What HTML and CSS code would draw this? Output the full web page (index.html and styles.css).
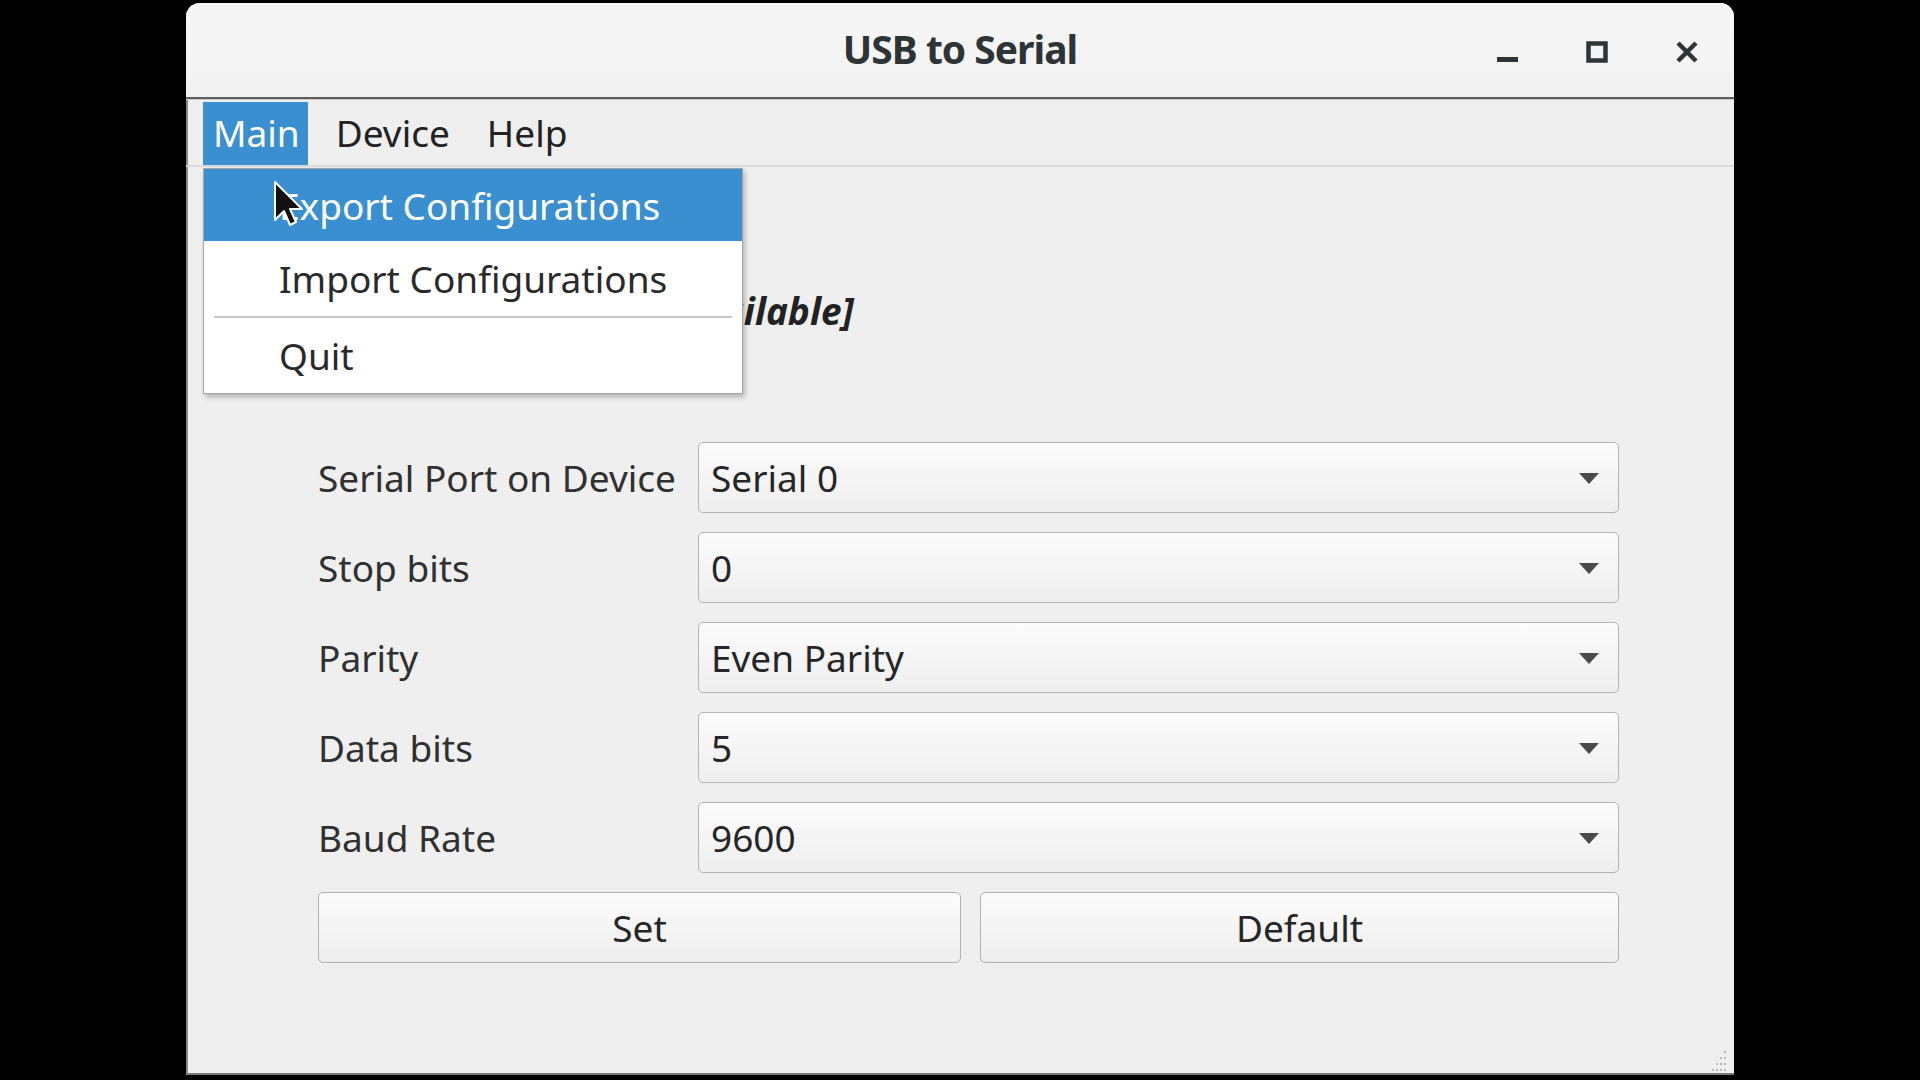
FILE: index.html
```html
<!DOCTYPE html>
<html>
<head>
<meta charset="utf-8">
<title>USB to Serial</title>
<link rel="stylesheet" href="styles.css">
</head>
<body>
<div class="desktop">
  <div class="window">
    <div class="titlebar">
      <div class="title">USB to Serial</div>
      <div class="wm-buttons">
        <svg class="wm-btn" width="24" height="24" viewBox="0 0 24 24"><rect x="2" y="16" width="21" height="5" fill="#2e3436"/></svg>
        <svg class="wm-btn" width="24" height="24" viewBox="0 0 24 24"><rect x="3.5" y="2.5" width="17" height="17" fill="none" stroke="#2e3436" stroke-width="4.5"/></svg>
        <svg class="wm-btn" width="24" height="24" viewBox="0 0 24 24"><path d="M3 2 L21 20 M21 2 L3 20" stroke="#2e3436" stroke-width="4.5" fill="none"/></svg>
      </div>
    </div>
    <div class="menubar">
      <div class="menu-item active">Main</div>
      <div class="menu-item">Device</div>
      <div class="menu-item">Help</div>
    </div>
    <div class="content">
      <div class="status"><span class="status-value">[Device not available]</span></div>
      <div class="form">
        <div class="label">Serial Port on Device</div>
        <div class="combo"><span>Serial 0</span><svg class="arrow" width="20" height="11" viewBox="0 0 20 11"><path d="M0 0 H20 L10 11 Z" fill="#4a4a4a"/></svg></div>
        <div class="label">Stop bits</div>
        <div class="combo"><span>0</span><svg class="arrow" width="20" height="11" viewBox="0 0 20 11"><path d="M0 0 H20 L10 11 Z" fill="#4a4a4a"/></svg></div>
        <div class="label">Parity</div>
        <div class="combo"><span>Even Parity</span><svg class="arrow" width="20" height="11" viewBox="0 0 20 11"><path d="M0 0 H20 L10 11 Z" fill="#4a4a4a"/></svg></div>
        <div class="label">Data bits</div>
        <div class="combo"><span>5</span><svg class="arrow" width="20" height="11" viewBox="0 0 20 11"><path d="M0 0 H20 L10 11 Z" fill="#4a4a4a"/></svg></div>
        <div class="label">Baud Rate</div>
        <div class="combo"><span>9600</span><svg class="arrow" width="20" height="11" viewBox="0 0 20 11"><path d="M0 0 H20 L10 11 Z" fill="#4a4a4a"/></svg></div>
        <div class="buttons">
          <div class="button">Set</div>
          <div class="button">Default</div>
        </div>
      </div>
    </div>
    <svg class="grip" width="26" height="26" viewBox="0 0 26 26">
      <g fill="#b8b8b8">
        <rect x="20" y="4" width="2" height="2"/>
        <rect x="16" y="10" width="2" height="2"/><rect x="20" y="10" width="2" height="2"/>
        <rect x="12" y="16" width="2" height="2"/><rect x="16" y="16" width="2" height="2"/><rect x="20" y="16" width="2" height="2"/>
        <rect x="8" y="22" width="2" height="2"/><rect x="12" y="22" width="2" height="2"/><rect x="16" y="22" width="2" height="2"/><rect x="20" y="22" width="2" height="2"/>
      </g>
    </svg>
    <div class="dropdown">
      <div class="dd-item highlighted">Export Configurations</div>
      <div class="dd-item">Import Configurations</div>
      <div class="dd-sep"></div>
      <div class="dd-item">Quit</div>
    </div>
    <svg class="cursor" width="30" height="48" viewBox="0 0 30 48">
      <path d="M2 2 L2 40 L11 31 L17 45 L23 42 L17 29 L29 29 Z" fill="#111" stroke="#fff" stroke-width="2" stroke-linejoin="round"/>
    </svg>
  </div>
</div>
</body>
</html>
```
FILE: styles.css
```css
html, body {
  margin: 0;
  padding: 0;
  background: #000;
  width: 1920px;
  height: 1080px;
  overflow: hidden;
}

.desktop {
  padding: 3px 0 0 186px;
}

.window {
  position: relative;
  width: 1548px;
  height: 1072px;
  background: #efefef;
  border-radius: 14px 14px 0 0;
  font-family: "Noto Sans", "Open Sans", sans-serif;
  color: #2f2f2f;
  font-size: 37px;
  box-shadow: inset 2px 0 0 #8a8a8a, inset 0 -2px 0 #7a7a7a;
}

.titlebar {
  height: 94px;
  background: linear-gradient(#f6f6f7, #f2f2f3);
  border-radius: 14px 14px 0 0;
  border-bottom: 2px solid #5e5e5e;
  box-shadow: 0 1px 0 #c9c9c9;
  display: flex;
  align-items: center;
  justify-content: center;
  position: relative;
}

.title {
  font-weight: bold;
  font-size: 39px;
  letter-spacing: -1px;
  color: #2e3436;
  margin-top: -4px;
}

.wm-buttons {
  position: absolute;
  right: 35px;
  top: 38px;
  display: flex;
  gap: 66px;
}

.wm-btn {
  display: block;
}

.menubar {
  height: 63px;
  margin-top: 3px;
  padding-left: 17px;
  border-bottom: 2px solid #dadada;
  display: flex;
  align-items: stretch;
  gap: 19px;
}

.menu-item {
  padding: 0 9px 3px 9px;
  display: flex;
  align-items: center;
  color: #222;
}

.menu-item.active {
  background: #3a8fd0;
  color: #fff;
  padding: 0 8px 3px 10px;
}

.content {
  padding: 119px 115px 0 132px;
}

.status {
  height: 50px;
  line-height: 50px;
  font-weight: bold;
  font-style: italic;
  color: #222;
  padding-left: 159px;
  white-space: nowrap;
}

.form {
  margin-top: 106px;
  display: grid;
  grid-template-columns: 380px 921px;
  grid-auto-rows: 71px;
  row-gap: 19px;
}

.label {
  display: flex;
  align-items: center;
  color: #303030;
}

.combo {
  box-sizing: border-box;
  border: 1.5px solid #b4b4b4;
  border-radius: 5px;
  background: linear-gradient(#fcfcfc, #eeeeee);
  display: flex;
  align-items: center;
  justify-content: space-between;
  padding: 0 19px 0 12px;
  color: #262626;
}

.arrow {
  display: block;
  margin-top: 2px;
}

.buttons {
  grid-column: 1 / 3;
  display: grid;
  grid-template-columns: 643px 1fr;
  column-gap: 19px;
}

.button {
  box-sizing: border-box;
  border: 1.5px solid #b0b0b0;
  border-radius: 5px;
  background: linear-gradient(#fcfcfc, #ededed);
  display: flex;
  align-items: center;
  justify-content: center;
  color: #262626;
}

.grip {
  position: absolute;
  right: 4px;
  bottom: 2px;
}

.dropdown {
  position: absolute;
  left: 17px;
  top: 165px;
  width: 540px;
  box-sizing: border-box;
  background: #fff;
  border: 1.5px solid #a6a6a6;
  box-shadow: 2px 3px 5px rgba(0, 0, 0, 0.25);
  padding-bottom: 1px;
}

.dd-item {
  height: 74px;
  display: flex;
  align-items: center;
  padding-left: 75px;
  color: #2a2a2a;
}

.dd-item.highlighted {
  height: 72px;
  background: #3a8fd0;
  color: #fff;
}

.dd-sep {
  height: 2px;
  background: #c8c8c8;
  margin: 1px 10px 0 10px;
}

.cursor {
  position: absolute;
  left: 87px;
  top: 177px;
}
```
